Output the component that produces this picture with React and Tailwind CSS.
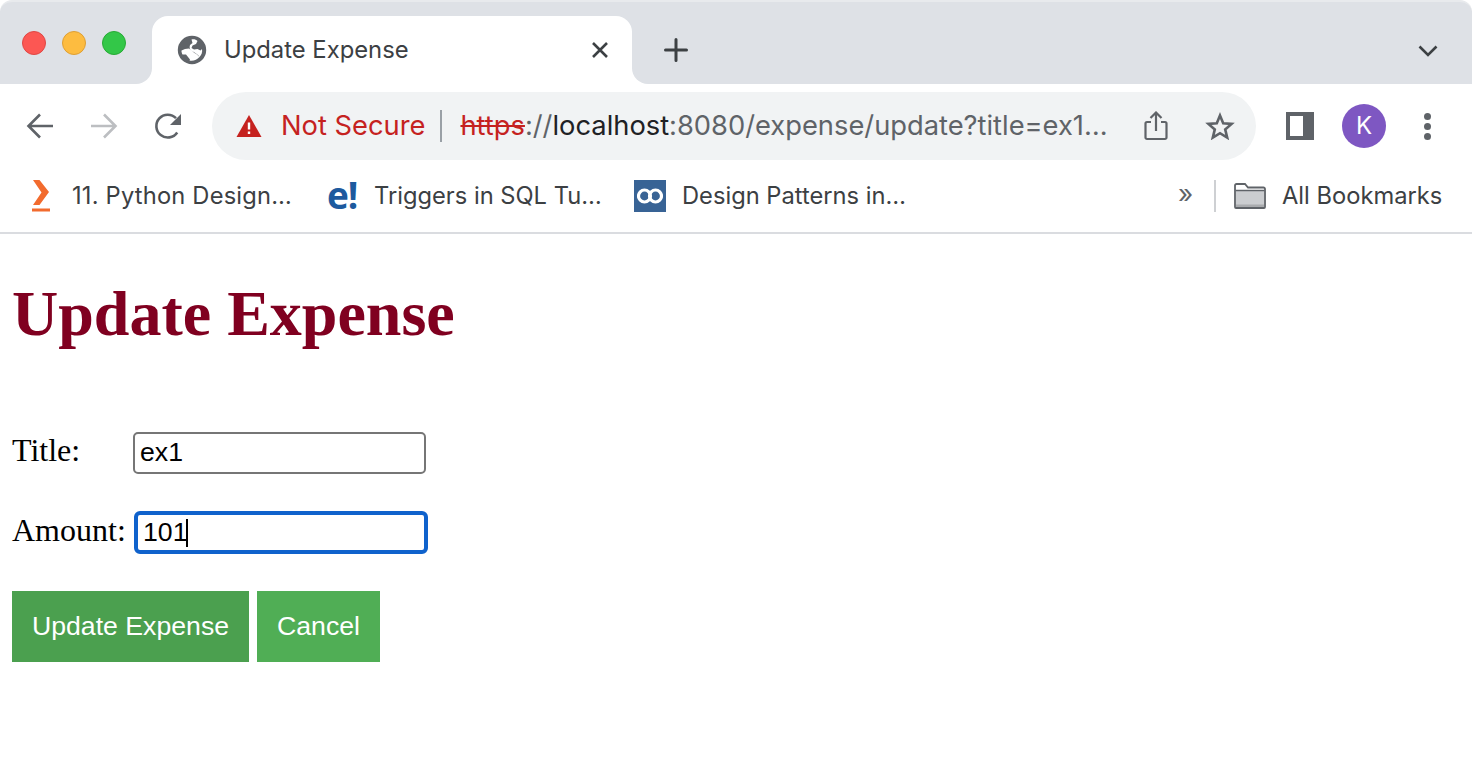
import React from "react";

const ui = { fontFamily: "Inter, 'Noto Sans', sans-serif" };

function Globe() {
  return (
    <svg width="30" height="30" viewBox="0 0 30 30" className="shrink-0">
      <circle cx="15" cy="15" r="14.2" fill="#5f6368" />
      <path d="M14.500 4.500 C17 4 19 4.500 20.500 6 L19 9 L15.500 10.500 L14.500 13 L17 14.500 L20.500 14 L23.500 15.500 L25 14 C25.600 17 24.500 20 22.500 22 L20 19.500 L17.500 18 L15 16 L12 13.500 L8 14 L4.500 15.500 C4.300 16.500 4.800 18 5.500 19.500 L9 19.500 L11 22 L13 24.500 L12.500 25.500 C16 26.300 20 25 22.500 22 C21 19 18 18 15 16 C13 15 12 13 13 10 L15.500 8 Z" fill="#fff" />
    </svg>
  );
}

function Back({ color }) {
  return (
    <svg width="28" height="28" viewBox="0 0 28 28" className="shrink-0" fill="none" stroke={color} strokeWidth="2.6">
      <path d="M27 14H3M14 2.500 2.500 14 14 25.500" />
    </svg>
  );
}

function Forward({ color }) {
  return (
    <svg width="28" height="28" viewBox="0 0 28 28" className="shrink-0" fill="none" stroke={color} strokeWidth="2.6">
      <path d="M1 14h24M14 2.500 25.500 14 14 25.500" />
    </svg>
  );
}

function Reload() {
  return (
    <svg width="28" height="28" viewBox="0 0 28 28" className="shrink-0">
      <path d="M23.200 20.500A11.400 11.400 0 1 1 22 6.200" fill="none" stroke="#5f6368" strokeWidth="2.6" />
      <path d="M27 2v11H16Z" fill="#5f6368" />
    </svg>
  );
}

function Warning() {
  return (
    <svg width="26" height="24" viewBox="0 0 26 24" className="shrink-0">
      <path d="M13 1 25.500 23H.5Z" fill="#c5221f" />
      <path d="M11.800 8.500h2.400v7h-2.400zM11.800 17.500h2.400v2.600h-2.400z" fill="#fff" />
    </svg>
  );
}

function Share() {
  return (
    <svg width="24" height="30" viewBox="0 0 24 30" className="shrink-0" fill="none" stroke="#5f6368" strokeWidth="2.2">
      <path d="M7 11H3a1.500 1.500 0 0 0-1.500 1.500v14A1.500 1.500 0 0 0 3 28h18a1.500 1.500 0 0 0 1.500-1.500v-14A1.500 1.500 0 0 0 21 11h-4" />
      <path d="M12 20V2M6.500 7 12 1.500 17.500 7" />
    </svg>
  );
}

function Star() {
  return (
    <svg width="30" height="28" viewBox="0 0 30 28" className="shrink-0" fill="none" stroke="#5f6368" strokeWidth="2.6" strokeLinejoin="miter">
      <path d="M15 3.500 18.200 11.200 26.600 11.900 20.200 17.400 22.200 25.600 15 21.200 7.800 25.600 9.800 17.400 3.400 11.900 11.800 11.200Z" />
    </svg>
  );
}

function PluralsightIcon() {
  return (
    <svg width="18" height="32" viewBox="0 0 18 32" className="shrink-0">
      <path d="M1 0H7.500L17 12 7.500 25H1L9.500 12.500Z" fill="#f26b2e" />
      <rect x="0" y="28.500" width="18" height="3" fill="#f26b2e" />
    </svg>
  );
}

function InfinityIcon() {
  return (
    <div className="w-8 h-8 shrink-0 bg-[#386395] flex items-center justify-center">
      <svg width="26" height="18" viewBox="0 0 26 18" fill="none" stroke="#fff" strokeWidth="3.2">
        <circle cx="7.500" cy="9" r="6" />
        <circle cx="18.500" cy="9" r="6" />
      </svg>
    </div>
  );
}

function Folder() {
  return (
    <svg width="32" height="26" viewBox="0 0 32 26" className="shrink-0">
      <path d="M1 24V2.500A1.500 1.500 0 0 1 2.500 1H11L14 4.500H29.500A1.500 1.500 0 0 1 31 6V24A1 1 0 0 1 30 25H2A1 1 0 0 1 1 24Z" fill="#fff" stroke="#5f6368" strokeWidth="1.8" />
      <path d="M2 8H30V24H2Z" fill="#cbcdd0" />
      <path d="M1.500 7.500H30.500" stroke="#5f6368" strokeWidth="1.5" />
      <path d="M2 21.500H30V24H2Z" fill="#a9abae" />
    </svg>
  );
}

function Bookmark({ icon, label, width, gap, wide }) {
  return (
    <div className="flex items-center shrink-0" style={{ width, gap }}>
      {icon}
      <span className={wide ? "text-[23.7px] leading-8 text-[#3c4043] whitespace-nowrap tracking-[0.2px]" : "text-[23.7px] leading-8 text-[#3c4043] whitespace-nowrap"}>{label}</span>
    </div>
  );
}

export default function App() {
  return (
    <div className="w-[1472px] h-[764px] overflow-hidden bg-white flex flex-col">
      <div style={ui} className="shrink-0">
        {/* tab strip */}
        <div className="flex h-[84px]">
          <div className="w-[152px] bg-[#dee1e6] border-t-2 border-[#e8eaed] rounded-tl-[12px] rounded-br-[16px] flex items-start gap-4 pl-[22px] pt-[29px]">
            <span className="w-6 h-6 rounded-full bg-[#fc5753] border border-[#df4744]" />
            <span className="w-6 h-6 rounded-full bg-[#fdbc40] border border-[#de9f34]" />
            <span className="w-6 h-6 rounded-full bg-[#33c748] border border-[#27aa35]" />
          </div>
          <div className="w-[480px] bg-[#dee1e6] border-t-2 border-[#e8eaed] pt-[14px]">
            <div className="h-[68px] bg-white rounded-t-[16px] flex items-center pl-[25px] pr-[23px]">
              <Globe />
              <span className="ml-[17px] text-[23.8px] text-[#3c4043] whitespace-nowrap flex-1">Update Expense</span>
              <svg width="18" height="18" viewBox="0 0 18 18" fill="none" stroke="#3c4043" strokeWidth="2.6" className="shrink-0">
                <path d="M2 2 16 16M16 2 2 16" />
              </svg>
            </div>
          </div>
          <div className="flex-1 bg-[#dee1e6] border-t-2 border-[#e8eaed] rounded-tr-[12px] rounded-bl-[16px] flex items-start justify-between pl-[32px] pr-[34px] pt-[36px]">
            <svg width="24" height="24" viewBox="0 0 24 24" fill="none" stroke="#3c4043" strokeWidth="3" strokeLinecap="round" className="shrink-0">
              <path d="M12 1.500V22.500M1.500 12H22.500" />
            </svg>
            <svg width="20" height="12" viewBox="0 0 20 12" fill="none" stroke="#3c4043" strokeWidth="2.6" className="shrink-0 mt-[7px]">
              <path d="M1.500 1.500 10 10 18.500 1.500" />
            </svg>
          </div>
        </div>

        {/* toolbar */}
        <div className="h-[84px] flex items-center">
          <div className="flex items-center gap-9 pl-[26px] w-[212px] shrink-0">
            <Back color="#5f6368" />
            <Forward color="#bcbec1" />
            <Reload />
          </div>
          <div className="w-[1044px] h-[68px] rounded-full bg-[#f1f3f4] flex items-center pl-6 pr-[21px] shrink-0">
            <Warning />
            <span className="ml-[19px] text-[27.3px] text-[#c5221f] whitespace-nowrap">Not Secure</span>
            <span className="ml-[15px] w-[2px] h-8 bg-[#9aa0a6] shrink-0" />
            <span className="ml-[18px] text-[27.3px] whitespace-nowrap flex-1">
              <span className="text-[#c5221f] line-through">https</span>
              <span className="text-[#5f6368]">://</span>
              <span className="text-[#202124]">localhost</span>
              <span className="text-[#5f6368]">:8080/expense/update?title=ex1…</span>
            </span>
            <Share />
            <span className="ml-[37px]"><Star /></span>
          </div>
          <div className="flex items-center pl-[30px]">
            <div className="w-7 h-7 bg-[#5f6368] flex justify-start p-1 pr-[11px] shrink-0">
              <div className="w-full h-full bg-white" />
            </div>
            <div className="ml-7 w-11 h-11 rounded-full bg-[#7e57c2] text-white text-[24px] flex items-center justify-center shrink-0">K</div>
            <div className="ml-[38px] flex flex-col gap-[3px] shrink-0">
              <span className="w-[7px] h-[7px] rounded-full bg-[#5f6368]" />
              <span className="w-[7px] h-[7px] rounded-full bg-[#5f6368]" />
              <span className="w-[7px] h-[7px] rounded-full bg-[#5f6368]" />
            </div>
          </div>
        </div>

        {/* bookmarks */}
        <div className="h-[66px] border-b-2 border-[#dadce0] flex items-start pt-3 pl-8">
          <Bookmark icon={<PluralsightIcon />} label="11. Python Design…" width={295} gap={22} wide />
          <Bookmark
            icon={<span className="text-[#1d5a9e] font-bold text-[37px] leading-8 w-[31px] -mt-[3px] tracking-[-1px] shrink-0" style={{ fontFamily: "'Open Sans', sans-serif" }}>e!</span>}
            label="Triggers in SQL Tu…"
            width={307}
            gap={16}
          />
          <Bookmark icon={<InfinityIcon />} label="Design Patterns in…" width={544} gap={16} />
          <span className="w-[15px] text-[26px] leading-7 text-[#5f6368] shrink-0">»</span>
          <span className="ml-[21px] w-[2px] h-8 bg-[#ced0d3] shrink-0" />
          <span className="ml-[18px]"><Bookmark icon={<Folder />} label="All Bookmarks" width={210} gap={16} /></span>
        </div>
      </div>

      {/* page */}
      <div className="flex flex-col pl-3 items-start" style={{ fontFamily: "'Liberation Serif', serif" }}>
        <h1 className="mt-[43px] text-[64px] leading-[74px] font-bold text-[#800020]">Update Expense</h1>

        <div className="mt-[81px] flex items-center h-[41px] text-[32px] text-black">
          <label className="w-[121px] shrink-0 mb-[5px]">Title:</label>
          <input
            readOnly
            value="ex1"
            className="w-[293px] h-[42px] border-2 border-[#767676] rounded-[5px] px-[5px] text-[26.67px] text-black bg-white outline-none"
            style={{ fontFamily: "'Liberation Sans', sans-serif" }}
          />
        </div>

        <div className="mt-[39px] flex items-center h-[41px] text-[32px] text-black">
          <label className="w-[122px] shrink-0 whitespace-nowrap mb-[6px]">Amount:</label>
          <div className="relative">
            <input
              readOnly
              value="101"
              className="block w-[294px] h-[43px] border-[4px] border-[#0f62cc] rounded-[6px] px-[5px] text-[26.67px] text-black bg-white outline-none"
              style={{ fontFamily: "'Liberation Sans', sans-serif" }}
            />
            <span className="absolute left-[52px] top-[8px] w-[2px] h-[28px] bg-black" />
          </div>
        </div>

        <div className="mt-[38px] flex gap-2" style={{ fontFamily: "'Liberation Sans', sans-serif" }}>
          <button className="w-[237px] h-[71px] pb-[2px] bg-[#4ba04f] text-white text-[26.67px]">Update Expense</button>
          <button className="w-[123px] h-[71px] pb-[2px] bg-[#50ae55] text-white text-[26.67px]">Cancel</button>
        </div>
      </div>
    </div>
  );
}
